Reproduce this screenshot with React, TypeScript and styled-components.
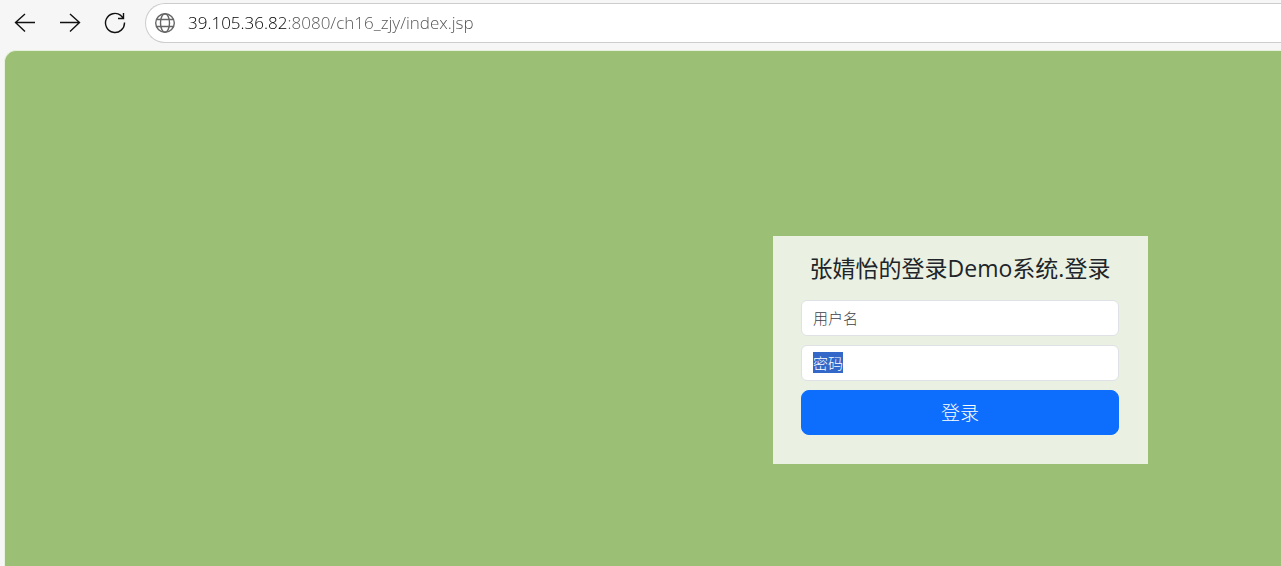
import React, { useState } from 'react';
import styled, { createGlobalStyle } from 'styled-components';

const GlobalStyle = createGlobalStyle`
  *, *::before, *::after { box-sizing: border-box; }
  body {
    margin: 0;
    background: #f6f6f6;
    font-family: 'Open Sans', 'Noto Sans CJK SC', sans-serif;
    color: #212529;
    overflow: hidden;
  }
`;

const Browser = styled.div`
  display: flex;
  flex-direction: column;
  min-height: 100vh;
`;

const Toolbar = styled.header`
  display: flex;
  align-items: center;
  height: 46px;
  padding-left: 10px;
  gap: 15px;
`;

const ToolButton = styled.button`
  display: flex;
  align-items: center;
  justify-content: center;
  width: 30px;
  height: 30px;
  padding: 0;
  border: 0;
  background: none;
  color: #111;
`;

const AddressBar = styled.label`
  display: flex;
  flex: 1;
  align-items: center;
  gap: 12px;
  height: 40px;
  padding-left: 8px;
  border: 1px solid #cdcdcd;
  border-right: 0;
  border-radius: 20px 0 0 20px;
  background: #fff;
  color: #666;
`;

const AddressInput = styled.input`
  flex: 1;
  min-width: 0;
  height: 24px;
  padding: 0;
  border: 0;
  outline: 0;
  font: 300 17px/24px 'Open Sans', sans-serif;
  color: #505050;
  background: linear-gradient(90deg, #000 101px, #505050 101px);
  -webkit-background-clip: text;
  background-clip: text;
  -webkit-text-fill-color: transparent;
`;

const Viewport = styled.main`
  display: flex;
  flex: 1;
  align-items: flex-start;
  justify-content: flex-end;
  margin: 4px 0 0 4px;
  padding: 185px 133px 0 20px;
  border: 1px solid #e6f2dc;
  border-width: 1px 0 0 1px;
  border-radius: 12px 0 0 0;
  background: #9bbf75;
`;

const LoginCard = styled.form`
  display: flex;
  flex-direction: column;
  gap: 9px;
  width: 100%;
  max-width: 375px;
  padding: 16px 29px 29px 28px;
  background: #eaf1e2;
`;

const Title = styled.h1`
  margin: 0 0 7px;
  font-size: 23px;
  line-height: 32px;
  font-weight: 400;
  text-align: center;
  white-space: nowrap;
`;

const Field = styled.input<{ $selected?: boolean }>`
  width: 100%;
  height: 36px;
  padding: 0 11px;
  border: 1px solid #dee2e6;
  border-radius: 6px;
  outline: 0;
  background: #fff;
  font: 300 15px/20px 'Open Sans', 'Noto Sans CJK SC', sans-serif;
  color: #212529;

  &::placeholder {
    opacity: 1;
    line-height: 20px;
    color: ${({ $selected }) => ($selected ? '#fff' : '#3c4146')};
    background: ${({ $selected }) =>
      $selected ? 'linear-gradient(#3367c8, #3367c8) 0 0 / 30px 100% no-repeat' : 'none'};
  }
`;

const SubmitButton = styled.button`
  height: 45px;
  border: 1px solid #0d6efd;
  border-radius: 8px;
  background: #0d6efd;
  color: #fff;
  font: 300 19px/28px 'Open Sans', 'Noto Sans CJK SC', sans-serif;
`;

const stroke = { fill: 'none', stroke: 'currentColor', strokeWidth: 1.4 };

const BackIcon = () => (
  <svg width="22" height="22" viewBox="0 0 22 22" {...stroke}>
    <path d="M21 10.500H1.500M11 2L1.500 10.500l9.500 9" />
  </svg>
);

const ForwardIcon = () => (
  <svg width="22" height="22" viewBox="0 0 22 22" {...stroke}>
    <path d="M1 10.500h19.500M11 2l9.500 8.500-9.500 9" />
  </svg>
);

const ReloadIcon = () => (
  <svg width="22" height="22" viewBox="0 0 22 22" {...stroke}>
    <path d="M20.500 10.500A9.500 9.500 0 1 1 16.800 3.400L19.500 6.300M19.500 1v5.500H14" />
  </svg>
);

const GlobeIcon = () => (
  <svg width="22" height="22" viewBox="0 0 22 22" {...stroke}>
    <circle cx="11" cy="11" r="9.300" />
    <ellipse cx="11" cy="11" rx="4.500" ry="9.300" />
    <path d="M2.500 7.500h17M2.500 14.500h17" />
  </svg>
);

export default function App() {
  const [address, setAddress] = useState('39.105.36.82:8080/ch16_zjy/index.jsp');

  return (
    <>
      <GlobalStyle />
      <Browser>
        <Toolbar>
          <ToolButton type="button" aria-label="后退"><BackIcon /></ToolButton>
          <ToolButton type="button" aria-label="前进"><ForwardIcon /></ToolButton>
          <ToolButton type="button" aria-label="刷新"><ReloadIcon /></ToolButton>
          <AddressBar>
            <GlobeIcon />
            <AddressInput
              aria-label="地址"
              spellCheck={false}
              value={address}
              onChange={(e) => setAddress(e.target.value)}
            />
          </AddressBar>
        </Toolbar>
        <Viewport>
          <LoginCard onSubmit={(e) => e.preventDefault()}>
            <Title>张婧怡的登录Demo系统.登录</Title>
            <Field type="text" name="username" placeholder="用户名" aria-label="用户名" />
            <Field type="password" name="password" placeholder="密码" aria-label="密码" $selected />
            <SubmitButton type="submit">登录</SubmitButton>
          </LoginCard>
        </Viewport>
      </Browser>
    </>
  );
}
